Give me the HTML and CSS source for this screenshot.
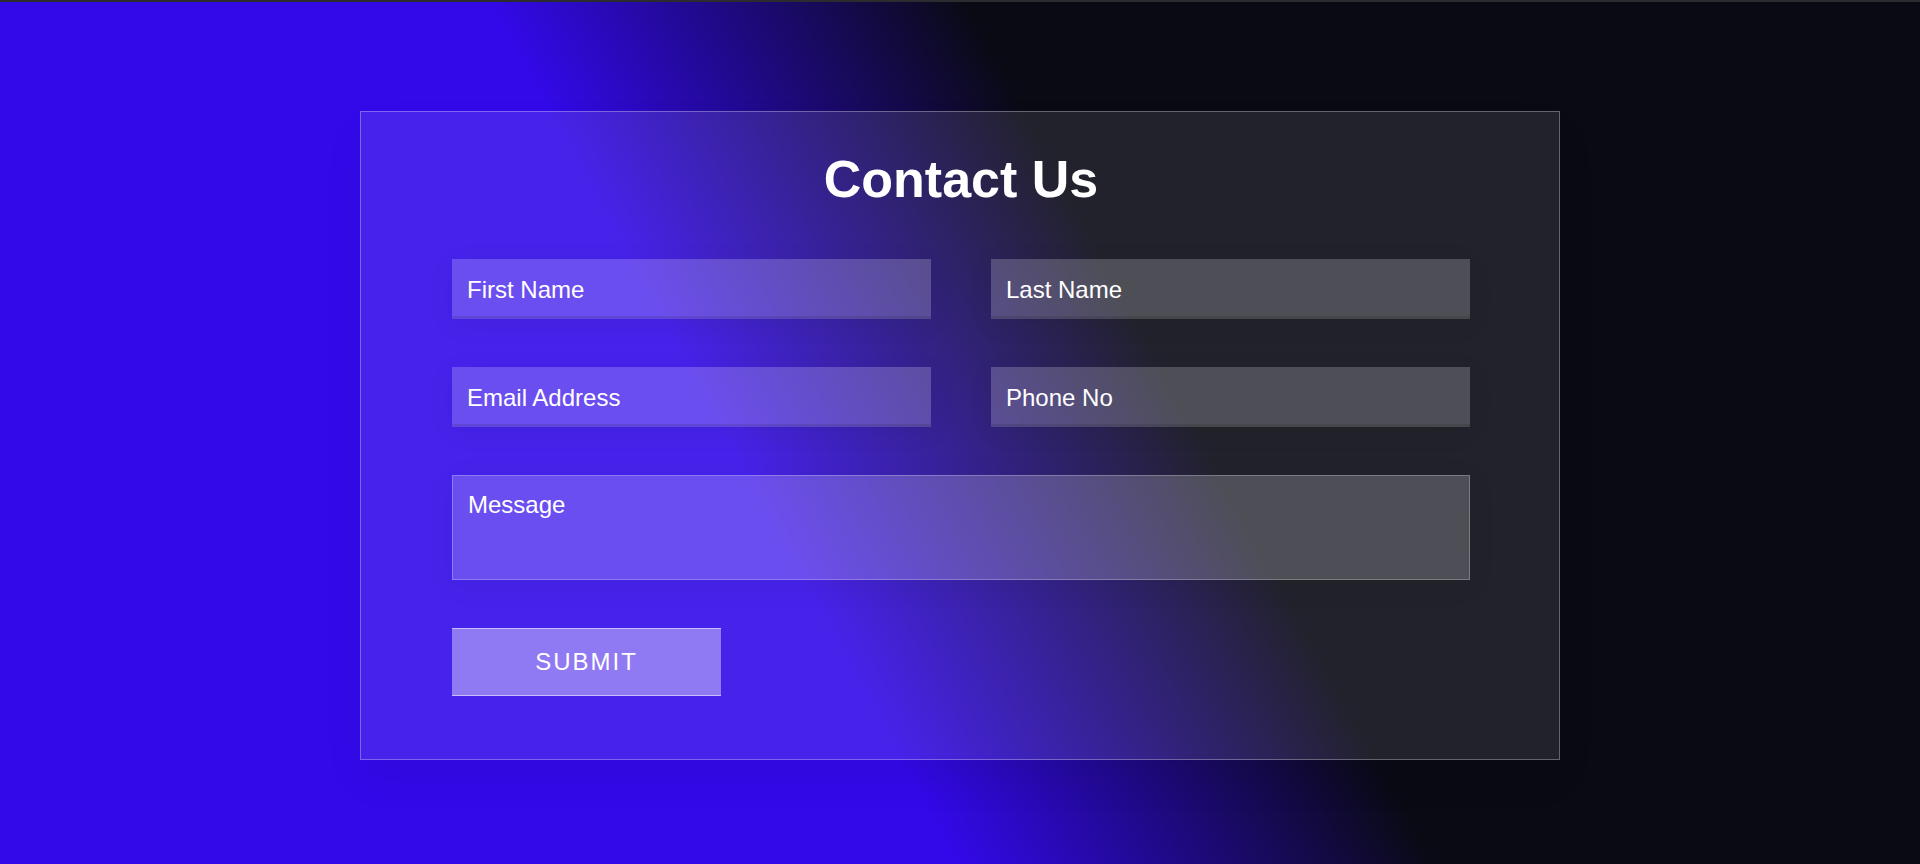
FILE: index.html
```html
<!DOCTYPE html>
<html lang="en">
<head>
<meta charset="utf-8">
<title>Contact Us</title>
<link rel="stylesheet" href="styles.css">
</head>
<body>
<div class="page">
  <form class="card">
    <h2 class="title">Contact Us</h2>
    <div class="fields">
      <div class="row">
        <input class="field" type="text" placeholder="First Name">
        <input class="field" type="text" placeholder="Last Name">
      </div>
      <div class="row">
        <input class="field" type="email" placeholder="Email Address">
        <input class="field" type="text" placeholder="Phone No">
      </div>
      <textarea class="field message" placeholder="Message"></textarea>
      <button class="submit" type="button">Submit</button>
    </div>
  </form>
</div>
</body>
</html>
```

FILE: styles.css
```css
* {
  box-sizing: border-box;
}

html,
body {
  margin: 0;
  height: 100%;
}

body {
  font-family: "Liberation Sans", Arial, sans-serif;
  background: linear-gradient(61.5deg, #3309e9 40%, #0a0a15 60%);
  overflow: hidden;
}

.page {
  min-height: 100vh;
  display: flex;
  justify-content: center;
  align-items: flex-start;
  padding-top: 109px;
  border-top: 2px solid #2b2b30;
}

.card {
  width: 1200px;
  padding: 37px 89px 63px 91px;
  background: rgba(255, 255, 255, 0.1);
  border: 1px solid rgba(255, 255, 255, 0.3);
  box-shadow: 0 20px 40px rgba(0, 0, 0, 0.05);
}

.title {
  margin: 0 0 50px;
  text-align: center;
  color: #fff;
  font-size: 52px;
  line-height: 60px;
  font-weight: 700;
}

.fields {
  display: flex;
  flex-direction: column;
  align-items: flex-start;
  gap: 48px;
}

.row {
  display: grid;
  grid-template-columns: 1fr 1fr;
  gap: 60px;
  width: 100%;
}

.field {
  display: block;
  width: 100%;
  height: 60px;
  padding: 2px 15px 0;
  border: none;
  outline: none;
  background: rgba(255, 255, 255, 0.2);
  color: #fff;
  font: 24px "Liberation Sans", Arial, sans-serif;
  box-shadow: inset 0 -3px 0 rgba(0, 0, 0, 0.1), 0 5px 30px rgba(0, 0, 0, 0.05);
}

.field::placeholder {
  color: #fff;
  opacity: 1;
}

.message {
  height: 105px;
  padding: 15px;
  border: 1px solid rgba(255, 255, 255, 0.25);
  box-shadow: 0 5px 30px rgba(0, 0, 0, 0.05);
  resize: none;
}

.submit {
  width: 269px;
  height: 68px;
  padding: 0;
  border: none;
  border-top: 1px solid rgba(255, 255, 255, 0.5);
  border-bottom: 1px solid rgba(255, 255, 255, 0.5);
  background: rgba(255, 255, 255, 0.4);
  color: #fff;
  font: 24px "Liberation Sans", Arial, sans-serif;
  letter-spacing: 2px;
  text-transform: uppercase;
  cursor: pointer;
}
```
